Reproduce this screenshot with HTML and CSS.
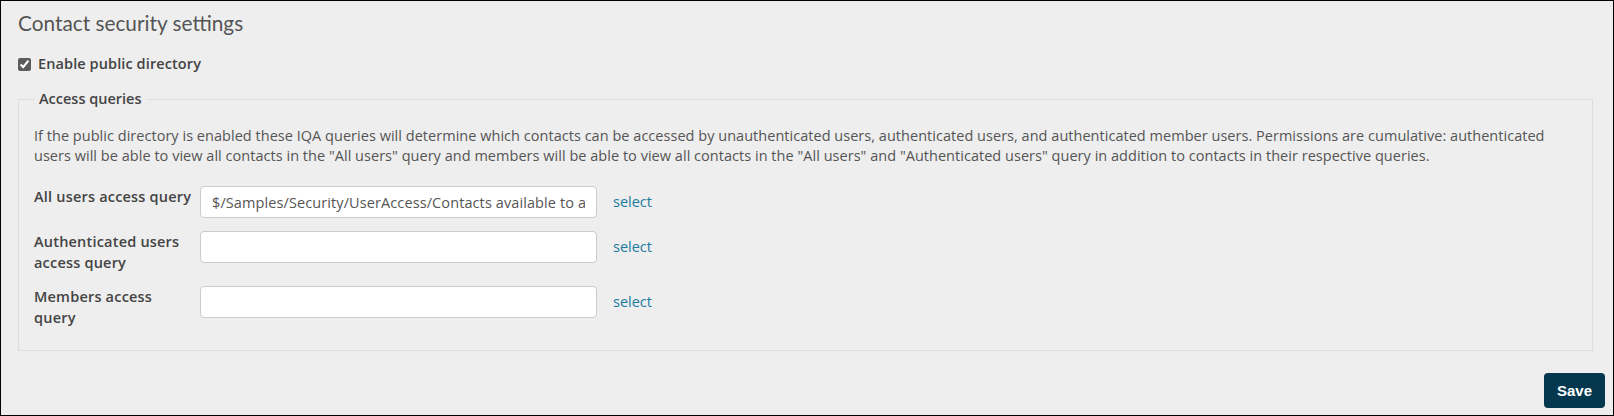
FILE: index.html
```html
<!DOCTYPE html>
<html lang="en">
<head>
    <meta charset="UTF-8">
    <title>Contact security settings</title>
    <link rel="stylesheet" href="styles.css">
</head>
<body>
    <div class="panel">
        <h2 class="panel-title">Contact security settings</h2>

        <label class="check-row">
            <input type="checkbox" checked>
            <span>Enable public directory</span>
        </label>

        <fieldset class="queries">
            <legend>Access queries</legend>
            <p class="help-text">If the public directory is enabled these IQA queries will determine which contacts can be accessed by unauthenticated users, authenticated users, and authenticated member users. Permissions are cumulative: authenticated users will be able to view all contacts in the "All users" query and members will be able to view all contacts in the "All users" and "Authenticated users" query in addition to contacts in their respective queries.</p>

            <div class="form-row">
                <label class="form-label" for="all-users">All users access query</label>
                <input class="form-input" id="all-users" type="text" value="$/Samples/Security/UserAccess/Contacts available to all users">
                <a class="select-link" href="#">select</a>
            </div>
            <div class="form-row">
                <label class="form-label" for="auth-users">Authenticated users access query</label>
                <input class="form-input" id="auth-users" type="text">
                <a class="select-link" href="#">select</a>
            </div>
            <div class="form-row">
                <label class="form-label" for="members">Members access query</label>
                <input class="form-input" id="members" type="text">
                <a class="select-link" href="#">select</a>
            </div>
        </fieldset>
    </div>

    <div class="actions">
        <button class="save-button">Save</button>
    </div>
</body>
</html>
```

FILE: styles.css
```css
:root {
    --bg: #eeeeee;
    --text: #444444;
    --muted: #555555;
    --line: #dddddd;
    --link: #1b7ba0;
    --navy: #05384f;
}

* {
    margin: 0;
    padding: 0;
    box-sizing: border-box;
}

html, body {
    height: 100%;
}

body {
    font-family: 'Open Sans', 'Noto Sans', sans-serif;
    background: var(--bg);
    color: var(--text);
    border: 1px solid #000;
    display: flex;
    flex-direction: column;
}

.panel {
    padding: 9px 20px 0 17px;
}

.panel-title {
    font-family: 'Lato', sans-serif;
    font-weight: 400;
    font-size: 20.8px;
    line-height: 26px;
    color: #555;
}

.check-row {
    display: flex;
    align-items: center;
    gap: 7px;
    margin-top: 18px;
    font-size: 14.5px;
    font-weight: 600;
    line-height: 20px;
    letter-spacing: 0.1px;
    color: #444;
}

.check-row input {
    width: 13px;
    height: 13px;
    margin: 0;
    accent-color: #5b5b5b;
}

.queries {
    margin-top: 15px;
    border: 1px solid var(--line);
    padding: 17px 15px 22px 15px;
}

.queries legend {
    padding: 0 5px;
    font-size: 14.5px;
    font-weight: 600;
    line-height: 20px;
    color: #444;
}

.help-text {
    font-size: 14.5px;
    line-height: 20px;
    letter-spacing: 0.03px;
    color: var(--muted);
    margin-bottom: 20px;
}

.form-row {
    display: flex;
    align-items: flex-start;
    margin-bottom: 13px;
}

.form-row:last-child {
    margin-bottom: 0;
}

.form-label {
    width: 166px;
    padding-right: 8px;
    font-size: 14.5px;
    font-weight: 600;
    line-height: 21px;
    letter-spacing: 0.2px;
    color: #444;
}

.form-input {
    width: 397px;
    height: 32px;
    padding: 0 11px;
    border: 1px solid #cccccc;
    border-radius: 4px;
    background: #fff;
    font-family: 'Open Sans', sans-serif;
    font-size: 14.5px;
    letter-spacing: 0.1px;
    color: #555;
    outline: none;
}

.select-link {
    margin-left: 16px;
    line-height: 32px;
    font-size: 14.5px;
    color: var(--link);
    text-decoration: none;
}

.actions {
    display: flex;
    justify-content: flex-end;
    margin-top: auto;
    padding: 0 8px 7px 0;
}

.save-button {
    width: 61px;
    height: 35px;
    border: none;
    border-radius: 4px;
    background: var(--navy);
    color: #fff;
    font-family: 'Liberation Sans', Arial, sans-serif;
    font-weight: bold;
    font-size: 15px;
    cursor: pointer;
}
```
